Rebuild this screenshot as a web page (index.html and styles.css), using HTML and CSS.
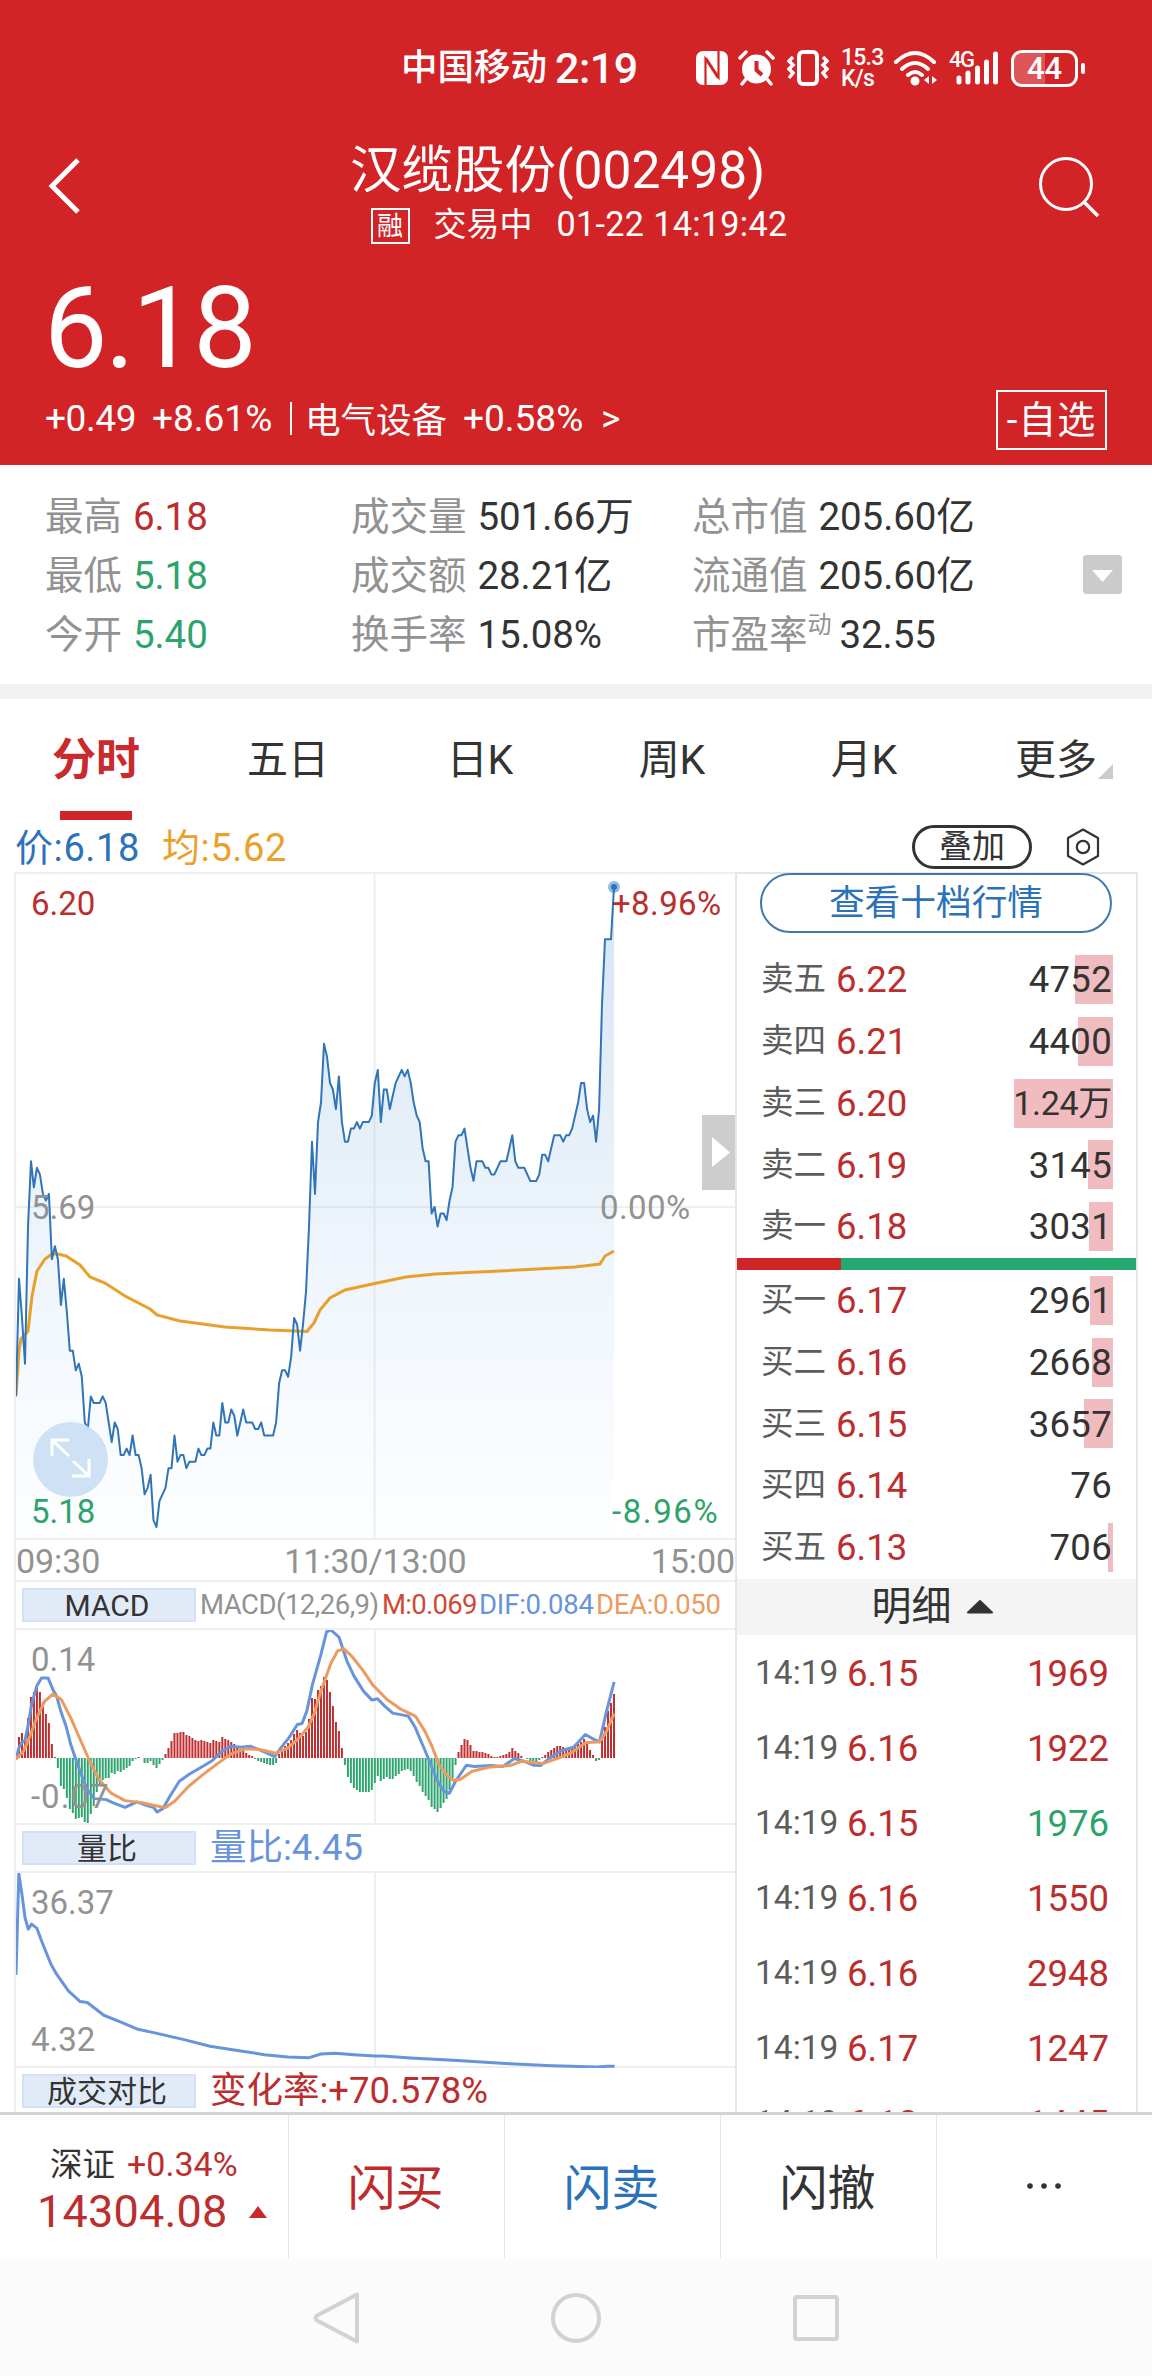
FILE: index.html
```html
<!DOCTYPE html>
<html lang="zh-CN">
<head>
    <meta charset="utf-8">
    <title>汉缆股份(002498)</title>

    <link rel="stylesheet" href="styles.css">
</head>
<body>
    <header class="header">
        <div class="status">
            <span class="carrier">中国移动</span>
            <span class="clock">2:19</span>
            <svg class="nfc" width="32" height="34" viewBox="0 0 32 34">
                <rect width="32" height="34" rx="7" fill="#fff"/>
                <path d="M9.500 34V8L22 27M22.500 0V26L10 7" fill="none" stroke="#d22427" stroke-width="2.200"/>
            </svg>
            <svg class="alarm" width="37" height="36" viewBox="0 0 37 36">
                <circle cx="18.500" cy="19" r="14.500" fill="#fff"/>
                <path d="M2 8L8 2M35 8L29 2M8 29L4 34M29 29L33 34" stroke="#fff" stroke-width="3.500" stroke-linecap="round"/>
                <path d="M18.500 11V20L24 25" stroke="#d22427" stroke-width="4" fill="none"/>
            </svg>
            <svg class="vibrate" width="42" height="36" viewBox="0 0 42 36" fill="none" stroke="#fff">
                <rect x="12" y="2" width="18" height="32" rx="4" stroke-width="4"/>
                <path d="M6 7L2 11L6 15L2 19L6 23L2 28M36 7L40 11L36 15L40 19L36 23L40 28" stroke-width="3.500"/>
            </svg>
            <span class="speed">15.3<br>K/s</span>
            <svg class="wifi" width="46" height="36" viewBox="0 0 46 36" fill="none" stroke="#fff" stroke-width="4" stroke-linecap="round">
                <path d="M3 12Q22 -6 41 12M9 19Q22 7 35 19M15 25Q22 19 29 25"/>
                <circle cx="22" cy="31" r="2.500" fill="#fff"/>
                <path d="M36 26V34L31 30ZM39 26V34L44 30Z" fill="#fff" stroke="none"/>
            </svg>
            <div class="signal">
                <span>4G</span>
                <svg width="46" height="34" viewBox="0 0 46 34" stroke="#fff" stroke-width="5" stroke-linecap="round">
                    <path d="M5 27V31M14 22V31M23.500 17V31M32.500 11V31M41.500 3V31"/>
                </svg>
            </div>
            <div class="battery"><span>44</span></div>
        </div>

        <div class="titlebar">
            <svg class="back" width="34" height="60" viewBox="0 0 34 60" fill="none" stroke="#fff" stroke-width="5">
                <path d="M31 4L5 30L31 56"/>
            </svg>
            <div class="title">
                <h1>汉缆股份(002498)</h1>
                <p><b class="tag">融</b><span>交易中</span><span class="time">01-22 14:19:42</span></p>
            </div>
            <svg class="search" width="64" height="64" viewBox="0 0 64 64" fill="none" stroke="#fff" stroke-width="3">
                <circle cx="29" cy="29" r="25.500"/>
                <path d="M47 47L61 61" stroke-width="3.500"/>
            </svg>
        </div>

        <div class="price">6.18</div>
        <div class="change">
            <span class="up-abs">+0.49</span>
            <span class="up-pct">+8.61%</span>
            <i></i>
            <span class="sector">电气设备</span>
            <span class="sector-pct">+0.58%</span>
            <span class="more">&gt;</span>
            <button class="watch">-自选</button>
        </div>
    </header>

    <section class="stats">
        <dl>
            <div><dt>最高</dt><dd class="red">6.18</dd></div>
            <div><dt>最低</dt><dd class="green">5.18</dd></div>
            <div><dt>今开</dt><dd class="green">5.40</dd></div>
        </dl>
        <dl>
            <div><dt>成交量</dt><dd>501.66万</dd></div>
            <div><dt>成交额</dt><dd>28.21亿</dd></div>
            <div><dt>换手率</dt><dd>15.08%</dd></div>
        </dl>
        <dl>
            <div><dt>总市值</dt><dd>205.60亿</dd></div>
            <div><dt>流通值</dt><dd>205.60亿</dd></div>
            <div><dt>市盈率<small>动</small></dt><dd class="pe">32.55</dd></div>
        </dl>
        <svg class="expand" width="39" height="39" viewBox="0 0 39 39">
            <rect width="39" height="39" rx="3" fill="#cbcbcb"/>
            <path d="M9 15H30L19.500 27Z" fill="#fff"/>
        </svg>
    </section>

    <nav class="tabs">
        <a class="active">分时</a>
        <a>五日</a>
        <a>日K</a>
        <a>周K</a>
        <a>月K</a>
        <a class="dropdown">更多</a>
    </nav>

    <div class="legend">
        <span class="blue">价:6.18</span>
        <span class="orange">均:5.62</span>
        <button class="overlay">叠加</button>
        <svg width="36" height="38" viewBox="0 0 36 38" fill="none" stroke="#333" stroke-width="2.200">
            <path d="M18 1.500L33 10V28L18 36.500L3 28V10Z" stroke-linejoin="round"/>
            <circle cx="18" cy="19" r="6.200"/>
        </svg>
    </div>

    <main class="main">
        <div class="charts">
            <div class="chart minute">
                <svg width="719" height="666" viewBox="0 0 719 666" fill="none">
                    <defs>
                        <linearGradient id="fill" x1="0" y1="0" x2="0" y2="666" gradientUnits="userSpaceOnUse">
                            <stop offset="0" stop-color="#2a75bd" stop-opacity=".2"/>
                            <stop offset="1" stop-color="#5aa5ed" stop-opacity=".01"/>
                        </linearGradient>
                    </defs>
                    <path d="M0 333H719M358.500 0V666" stroke="#efefef" stroke-width="2"/>
                    <polygon id="priceArea" fill="url(#fill)"/>
                    <polyline stroke="#e9a02b" stroke-width="3" points="0,521 3,477 5,465 12,457 16,422 21,397 29,385 36,380 42,380 50,382 64,391 74,403 89,409 109,422 134,435 141,441 164,447 209,453 254,456 291,457.500 298,449 304,436 314,424 329,416 361,409 390,403 419,400 484,397 559,393 584,390 589,382 598,377"/>
                    <polyline id="priceLine" stroke="#2f75b8" stroke-width="2" stroke-linejoin="round"/>
                    <circle cx="598" cy="13" r="6" fill="#2a75bd" fill-opacity=".5"/>
                    <circle cx="598" cy="13" r="3" fill="#2a75bd"/>
                </svg>
                <span class="lab top red">6.20</span>
                <span class="lab mid">5.69</span>
                <span class="lab low green">5.18</span>
                <span class="lab rtop red">+8.96%</span>
                <span class="lab rmid">0.00%</span>
                <span class="lab rlow green">-8.96%</span>
                <svg class="zoom" width="75" height="75" viewBox="0 0 75 75" fill="none" stroke="#fff" stroke-width="3">
                    <circle cx="37.500" cy="37.500" r="37.500" fill="#cbdff4" fill-opacity=".92" stroke="none"/>
                    <path d="M19 34V18H36M19 18L36 34M56 37V54H39M56 54L40 39"/>
                </svg>
                <svg class="fold" width="33" height="75" viewBox="0 0 33 75">
                    <rect width="33" height="75" fill="#cdcdcd"/>
                    <path d="M10 22L28 37.500L10 52Z" fill="#fff"/>
                </svg>
            </div>

            <div class="axis"><span>09:30</span><span>11:30/13:00</span><span>15:00</span></div>

            <div class="indicator macd">
                <b>MACD</b>
                <span class="gray">MACD(12,26,9)</span>
                <span class="m">M:0.069</span>
                <span class="dif">DIF:0.084</span>
                <span class="dea">DEA:0.050</span>
            </div>
            <div class="chart sub">
                <svg width="719" height="195" viewBox="0 0 719 195">
                    <path d="M359 0V195" stroke="#efefef" stroke-width="2"/>
                    <g id="macdBars"></g>
                    <svg width="719" height="195" viewBox="34 297 1523 584" preserveAspectRatio="none" fill="none" stroke-linejoin="round">
                        <polyline class="line dif-line" points="34,684 40,650 46,635 53,628 60,580 67,520 78,465 88,441 102,441 112,475 120,495 130,545 140,585 150,640 162,690 175,740 185,775 200,802 225,805 240,815 265,828 290,812 310,822 325,828 333,842 345,832 360,795 380,750 400,730 430,705 450,688 470,660 490,645 510,648 530,645 560,662 582,676 595,650 612,620 630,580 640,577 650,540 662,460 680,370 692,302 702,298 718,318 735,390 750,435 770,480 788,507 800,503 815,525 832,546 865,555 880,590 895,640 910,690 925,745 940,780 952,786 965,750 988,702 1005,706 1040,703 1065,706 1090,682 1110,690 1130,702 1145,703 1165,680 1190,658 1215,648 1240,610 1255,622 1270,632 1285,540 1301,452"/>
                        <polyline class="line dea-line" points="34,684 50,660 62,620 78,560 95,510 112,489 130,505 150,560 170,625 190,690 210,745 235,785 265,808 300,814 325,822 350,829 370,810 400,765 430,730 460,698 490,668 520,653 550,655 585,666 610,650 630,625 652,590 665,550 680,480 700,400 715,360 728,353 745,375 770,420 790,462 820,505 850,535 880,555 900,600 915,645 930,700 945,730 960,747 975,745 1000,720 1040,707 1080,703 1105,690 1150,697 1180,682 1210,665 1240,635 1270,632 1285,600 1301,547"/>
                    </svg>
                </svg>
                <span class="lab top">0.14</span>
                <span class="lab low minus">-0.07</span>
            </div>

            <div class="indicator">
                <b>量比</b>
                <span class="dif">量比:4.45</span>
            </div>
            <div class="chart sub">
                <svg width="719" height="195" viewBox="0 0 719 195">
                    <path d="M359 0V195" stroke="#efefef" stroke-width="2"/>
                    <svg width="719" height="195" viewBox="34 157 1523 584" preserveAspectRatio="none" fill="none" stroke-linejoin="round">
                        <polyline class="line dif-line" points="34,462 40,160 47,225 53,290 60,325 67,310 78,322 88,360 98,395 108,430 120,460 145,510 170,542 185,545 220,583 255,603 290,624 335,638 390,656 445,676 510,690 560,701 610,708 655,710 680,699 710,697 750,701 795,705 810,705 870,711 960,718 1080,728 1170,734 1265,738 1285,736 1302,736"/>
                    </svg>
                </svg>
                <span class="lab top">36.37</span>
                <span class="lab low">4.32</span>
            </div>

            <div class="indicator">
                <b>成交对比</b>
                <span class="red">变化率:+70.578%</span>
            </div>
        </div>

        <aside class="book">
            <button class="depth">查看十档行情</button>
            <ul class="orders asks">
                <li><i>卖五</i><em>6.22</em><span>4752</span><u style="width: 38px"></u></li>
                <li><i>卖四</i><em>6.21</em><span>4400</span><u style="width: 35px"></u></li>
                <li><i>卖三</i><em>6.20</em><span class="wan">1.24万</span><u style="width: 99px"></u></li>
                <li><i>卖二</i><em>6.19</em><span>3145</span><u style="width: 25px"></u></li>
                <li><i>卖一</i><em>6.18</em><span>3031</span><u style="width: 24px"></u></li>
            </ul>
            <div class="ratio"><i style="width: 26%"></i></div>
            <ul class="orders bids">
                <li><i>买一</i><em>6.17</em><span>2961</span><u style="width: 23px"></u></li>
                <li><i>买二</i><em>6.16</em><span>2668</span><u style="width: 21px"></u></li>
                <li><i>买三</i><em>6.15</em><span>3657</span><u style="width: 29px"></u></li>
                <li><i>买四</i><em>6.14</em><span>76</span><u style="width: 0"></u></li>
                <li><i>买五</i><em>6.13</em><span>706</span><u style="width: 5px"></u></li>
            </ul>
            <div class="detail-head">明细
                <svg width="28" height="16" viewBox="0 0 28 16"><path d="M14 2L26 13.500H2Z" fill="#333" stroke="#333" stroke-width="2" stroke-linejoin="round"/></svg>
            </div>
            <ul class="ticks">
                <li><i>14:19</i><em>6.15</em><span>1969</span></li>
                <li><i>14:19</i><em>6.16</em><span>1922</span></li>
                <li><i>14:19</i><em>6.15</em><span class="green">1976</span></li>
                <li><i>14:19</i><em>6.16</em><span>1550</span></li>
                <li><i>14:19</i><em>6.16</em><span>2948</span></li>
                <li><i>14:19</i><em>6.17</em><span>1247</span></li>
                <li><i>14:19</i><em>6.18</em><span>1445</span></li>
            </ul>
        </aside>
    </main>

    <footer class="actions">
        <div class="index">
            <p><span>深证</span> <em>+0.34%</em></p>
            <p class="points">14304.08 <svg width="18" height="12" viewBox="0 0 18 12"><path d="M9 0L18 12H0Z" fill="#c9282b"/></svg></p>
        </div>
        <button class="buy">闪买</button>
        <button class="sell">闪卖</button>
        <button>闪撤</button>
        <button class="dots">
            <svg width="36" height="8" viewBox="0 0 36 8" fill="#333"><circle cx="4" cy="4" r="2.800"/><circle cx="18" cy="4" r="2.800"/><circle cx="32" cy="4" r="2.800"/></svg>
        </button>
    </footer>

    <div class="sysnav">
        <svg width="52" height="52" viewBox="0 0 52 52"><path d="M47 2.500V49.500L7 28.500Q4 26 7 23.500Z"/></svg>
        <svg width="52" height="52" viewBox="0 0 52 52"><circle cx="26" cy="26" r="23"/></svg>
        <svg width="52" height="52" viewBox="0 0 52 52"><rect x="5" y="5" width="42" height="42" rx="2"/></svg>
    </div>

    <script src="script.js"></script>
</body>
</html>
```

FILE: styles.css
```css
* {
    box-sizing: border-box;
    margin: 0;
    padding: 0;
}
body {
    width: 1152px;
    height: 2376px;
    overflow: hidden;
    background: #fff;
    color: #333;
    font-family: Roboto, "Noto Sans CJK SC", sans-serif;
    font-size: 37px;
}
i, em {
    font-style: normal;
}
ul {
    list-style: none;
}
button {
    font: inherit;
    background: none;
    border: none;
}
svg {
    display: block;
}
.red { color: #bc2d2e; }
.green { color: #2da36c; }
.blue { color: #2c72b8; }
.orange { color: #eba02c; }

/* header */
.header {
    height: 465px;
    background: #d22427;
    color: #fff;
}
.status {
    display: flex;
    align-items: center;
    height: 136px;
    padding-left: 401px;
}
.carrier {
    width: 154px;
    font-size: 36.500px;
    font-weight: 500;
    line-height: 44px;
    white-space: nowrap;
}
.clock {
    width: 141px;
    font-size: 43px;
    font-weight: 500;
    letter-spacing: -.5px;
}
.nfc { margin-right: 10px; }
.alarm { margin-right: 12px; }
.vibrate { margin-right: 12px; }
.speed {
    width: 52px;
    font-size: 23px;
    font-weight: 500;
    line-height: 21px;
    letter-spacing: -.8px;
}
.wifi { margin-right: 10px; }
/* network label sits above the short bars */
.signal {
    display: grid;
    width: 62px;
}
.signal span, .signal svg { grid-area: 1 / 1; }
.signal svg { margin-left: 5px; }
.signal span {
    font-size: 22px;
    font-weight: 500;
    line-height: 18px;
    letter-spacing: -1.500px;
}
.battery {
    position: relative;
    width: 67px;
    height: 37px;
    border: 3px solid #fff;
    border-radius: 11px;
    background: linear-gradient(90deg, #dd5558 50%, transparent 50%);
    font-size: 31px;
    font-weight: 500;
    line-height: 31px;
    text-align: center;
}
.battery::after {
    content: "";
    position: absolute;
    right: -10px;
    top: 10px;
    width: 4px;
    height: 11px;
    border-radius: 2px;
    background: #fff;
}
.titlebar {
    display: flex;
    align-items: flex-start;
    height: 134px;
}
.back { margin: 20px 0 0 47px; }
.title {
    width: 815px;
    margin-left: 69px;
    text-align: center;
}
.title h1 {
    font-size: 51.500px;
    font-weight: 400;
    line-height: 70px;
    height: 68px;
}
.title p {
    display: flex;
    justify-content: center;
    height: 42px;
    font-size: 33px;
    line-height: 41px;
    padding-left: 43px;
}
.title p span { margin-left: 24px; }
.title .time {
    font-size: 34.200px;
    letter-spacing: .3px;
}
.title .tag {
    width: 39px;
    height: 36px;
    margin-top: 4px;
    border: 2px solid #fff;
    font-size: 26px;
    font-weight: 400;
    line-height: 32px;
}
.search {
    margin: 19px 0 0 72px;
}
.price {
    height: 112px;
    padding-left: 44px;
    font-size: 113px;
    line-height: 117px;
    letter-spacing: -2.500px;
}
.change {
    display: flex;
    align-items: center;
    height: 73px;
    padding-left: 45px;
    font-size: 37px;
    white-space: nowrap;
}
.up-abs { width: 107px; letter-spacing: -.4px; }
.up-pct { width: 138px; }
.change i {
    width: 2px;
    height: 33px;
    margin-right: 13px;
    background: #fff;
}
.sector {
    width: 158px;
    margin-top: -2px;
    font-size: 35.500px;
}
.sector-pct { width: 138px; }
.more { width: 395px; }
.watch {
    height: 60px;
    width: 111px;
    margin-top: 3px;
    border: 2px solid #fff;
    color: #fff;
    font-size: 38px;
    line-height: 54px;
    letter-spacing: 1px;
}

/* key figures */
.stats {
    display: flex;
    height: 219px;
    padding: 22px 30px 0 45px;
    font-size: 38.500px;
}
.stats dl { width: 306px; }
.stats dl:nth-of-type(2) { width: 341px; }
.stats dl:nth-of-type(3) { width: 391px; }
.stats dl div {
    display: flex;
    height: 59px;
    line-height: 60px;
    white-space: nowrap;
}
.stats dt { color: #929292; }
.stats dd {
    margin-left: 11px;
    letter-spacing: -.1px;
}
.stats small {
    font-size: 24px;
    vertical-align: 15px;
    line-height: 1;
}
.stats .pe { margin-left: 8px; }
.expand { margin-top: 68px; }

/* period tabs */
.tabs {
    display: grid;
    grid-template-columns: repeat(6, 1fr);
    height: 136px;
    border-top: 15px solid #f1f1f1;
    font-size: 41px;
    line-height: 122px;
    text-align: center;
}
.tabs a { position: relative; }
.tabs .active {
    color: #c92a2b;
    font-size: 44px;
    font-weight: 700;
}
.tabs .active::after {
    content: "";
    position: absolute;
    left: 60px;
    bottom: 1px;
    width: 72px;
    height: 9px;
    background: #d12427;
}
.tabs .dropdown::after {
    content: "";
    position: absolute;
    right: 39px;
    bottom: 42px;
    border-left: 15px solid transparent;
    border-bottom: 15px solid #cbcbcb;
}
.legend {
    display: flex;
    align-items: center;
    height: 52px;
    padding: 2px 51px 0 15px;
}
.legend span { margin-top: -6px; font-size: 38px; letter-spacing: .6px; }
.legend .blue { width: 147px; }
.legend .orange { width: 750px; }
.overlay {
    width: 120px;
    height: 44px;
    margin-right: 33px;
    border: 3px solid #333;
    border-radius: 22px;
    color: #333;
    font-size: 33px;
    line-height: 38px;
}

/* charts and order book */
.main {
    display: flex;
    height: 1240px;
    margin: 0 14px;
    overflow: hidden;
}
.charts {
    width: 721px;
    border-left: 2px solid #efefef;
}
.chart {
    position: relative;
    border-top: 2px solid #efefef;
}
.minute { height: 666px; }
.sub { height: 195px; }
.lab {
    position: absolute;
    left: 15px;
    color: #929292;
    font-size: 33px;
    line-height: 36px;
}
.lab.red { color: #bc2d2e; }
.lab.green { color: #2da36c; }
.minute .top { top: 12px; }
.minute .mid { top: 316px; }
.minute .low { top: 620px; }
.minute .rtop { left: 596px; top: 12px; letter-spacing: .4px; }
.minute .rmid { left: 584px; top: 316px; letter-spacing: .4px; }
.minute .rlow { left: 596px; top: 620px; letter-spacing: 1.600px; }
.sub .top { top: 12px; }
.sub .low { top: 149px; }
.sub .minus { letter-spacing: 1px; }
.zoom {
    position: absolute;
    left: 17px;
    top: 548px;
}
.fold {
    position: absolute;
    right: 0;
    top: 241px;
}
.axis {
    display: flex;
    justify-content: space-between;
    height: 42px;
    border-top: 2px solid #efefef;
    color: #929292;
    font-size: 34px;
    line-height: 42px;
    letter-spacing: -.1px;
}
.indicator {
    display: flex;
    align-items: center;
    height: 48px;
    border-top: 2px solid #efefef;
    font-size: 36.500px;
    line-height: 44px;
    white-space: nowrap;
}
.indicator b {
    width: 174px;
    height: 34px;
    margin: 0 14px 0 6px;
    border: 2px solid #d3e0f5;
    background: #e1ebf8;
    font-size: 30px;
    font-weight: 400;
    line-height: 31px;
    text-align: center;
    text-indent: -4px;
}
.macd { font-size: 27.500px; letter-spacing: -.5px; }
.macd b { margin-right: 4px; letter-spacing: 0; }
.macd .gray { width: 182px; color: #929292; }
.macd .m { width: 97px; color: #cf4a35; letter-spacing: -.7px; }
.macd .dif { width: 117px; letter-spacing: -.2px; }
.dif { color: #6794da; }
.dea { color: #eb9b61; letter-spacing: -.3px; }
.line {
    stroke-width: 3px;
    vector-effect: non-scaling-stroke;
}
.dif-line { stroke: #6794da; }
.dea-line { stroke: #eb9b61; }

.book {
    width: 403px;
    border: 2px solid #e6e6e6;
    border-bottom: none;
}
.depth {
    display: block;
    width: 352px;
    height: 60px;
    margin: -1px 0 0 23px;
    border: 2px solid #3f79ad;
    border-radius: 30px;
    color: #2c72b8;
    font-size: 35.700px;
    line-height: 57px;
}
.orders li {
    display: grid;
    grid-template-columns: 75px 120px 1fr;
    align-items: center;
    height: 61.750px;
    padding: 0 24px;
    font-size: 36.500px;
    line-height: 49px;
    position: relative;
}
.orders i {
    color: #5c5c5c;
    font-size: 32.500px;
}
.orders em { color: #bc2d2e; }
.orders span { text-align: right; letter-spacing: .3px; }
.orders .wan { font-size: 34px; letter-spacing: -.3px; }
/* volume share drawn behind the number */
.orders u {
    position: absolute;
    right: 23px;
    top: 6px;
    height: 49px;
    background: #f0bcbf;
    z-index: -1;
}
.asks { padding-top: 16px; }
.ratio {
    height: 12px;
    background: #24a96e;
}
.ratio i {
    display: block;
    height: 12px;
    background: #d12427;
}
.detail-head {
    display: flex;
    align-items: center;
    justify-content: center;
    gap: 14px;
    height: 56px;
    padding-right: 8px;
    background: #f4f4f4;
    font-size: 40px;
    line-height: 57px;
}
.ticks li {
    display: grid;
    grid-template-columns: 92px 120px 1fr;
    height: 75px;
    padding: 0 27px 0 18px;
    color: #bc2d2e;
    font-size: 36.500px;
    line-height: 77px;
}
.ticks i {
    color: #5c5c5c;
    font-size: 33.500px;
    line-height: 75px;
}
.ticks span { text-align: right; }

/* bottom bar */
.actions {
    display: grid;
    grid-template-columns: 289px 216px 216px 216px 215px;
    height: 147px;
    border-top: 3px solid #d4d4d4;
}
.actions > * { border-right: 1px solid #e4e4e4; }
.actions > :last-child { border-right: none; }
.actions button {
    padding: 0 2px 6px 0;
    color: #333;
    font-size: 48px;
}
.actions .buy { color: #bf2b2d; }
.actions .sell { color: #2c72b8; }
.actions .dots { padding-bottom: 3px; }
.index {
    padding: 27px 0 0 50px;
    line-height: 44px;
    white-space: nowrap;
}
.index p { font-size: 32.500px; }
.index em {
    margin-left: 4px;
    color: #bc2d2e;
    font-size: 34px;
}
.index .points {
    display: flex;
    align-items: center;
    gap: 21px;
    margin-left: -13px;
    color: #bc2d2e;
    font-size: 45px;
    line-height: 50px;
    letter-spacing: .2px;
}
.dots svg { margin: 0 auto; }
.sysnav {
    display: flex;
    justify-content: center;
    gap: 188px;
    height: 117px;
    padding-top: 33px;
    background: #fbfbfb;
}
.sysnav svg {
    fill: none;
    stroke: #d2d2d2;
    stroke-width: 4px;
    stroke-linejoin: round;
}
```

FILE: script.js
```javascript
// minute prices, in cents above or below the previous close (5.69)
const prices = [
    -29, -11, -17, -24, -3, 7, 3, 6, 5, 2, 1, 2, -8, -6, -8, -15, -11, -16, -22, -22,
    -25, -24, -26, -33, -34, -29, -30, -30, -30, -29, -30, -33, -36, -33, -34, -38, -38, -37, -38, -35,
    -38, -38, -40, -44, -43, -41, -48, -49, -45, -44, -43, -40, -40, -35, -39, -38, -38, -40, -39, -39,
    -39, -37, -38, -38, -37, -37, -33, -35, -35, -30, -33, -33, -31, -32, -35, -33, -31, -33, -33, -33,
    -34, -34, -33, -35, -35, -35, -35, -33, -27, -25, -25, -26, -23, -17, -18, -22, -18, -13, -3, 10,
    2, 13, 16, 25, 23, 19, 18, 15, 20, 13, 10, 10, 12, 12, 13, 12, 13, 13, 13, 14,
    19, 21, 13, 18, 18, 15, 17, 19, 20, 21, 20, 21, 19, 16, 14, 13, 9, 7, 7, -1,
    0, -3, -1, -1, -2, 1, 3, 10, 11, 11, 12, 9, 6, 4, 7, 7, 7, 6, 6, 5,
    5, 6, 7, 7, 7, 9, 11, 7, 6, 6, 6, 5, 4, 4, 4, 5, 8, 8, 7, 9,
    11, 11, 11, 10, 11, 11, 12, 14, 16, 19, 19, 15, 13, 14, 10, 15, 31, 41, 41, 41,
    49
];

const macd = [
    0, 21, 25, 18, 40, 61, 66, 70, 66, 56, 44, 35, 14, 1, -10, -28, -31, -40, -51, -55,
    -61, -60, -59, -64, -65, -56, -48, -34, -26, -22, -20, -20, -15, -16, -13, -14, -12, -10, -8, -3,
    -1, 1, 0, -5, -5, -3, -7, -10, -6, -2, 4, 10, 17, 25, 25, 26, 26, 23, 22, 20,
    18, 17, 18, 17, 16, 15, 18, 17, 16, 21, 19, 18, 16, 14, 12, 9, 7, 5, 3, 2,
    -1, -3, -4, -5, -6, -7, -7, -5, 4, 9, 12, 15, 18, 24, 28, 25, 22, 26, 39, 60,
    59, 68, 72, 81, 78, 66, 52, 36, 27, 10, -7, -19, -25, -30, -32, -34, -34, -34, -34, -32,
    -25, -18, -23, -21, -19, -21, -21, -18, -16, -13, -12, -11, -13, -18, -24, -28, -34, -38, -42, -49,
    -51, -54, -50, -45, -41, -32, -20, -7, 6, 13, 19, 18, 13, 7, 7, 6, 6, 5, 4, 2,
    1, 1, 2, 3, 4, 6, 10, 7, 5, 2, 0, -1, -3, -4, -4, -2, 1, 3, 6, 8,
    10, 12, 12, 11, 10, 11, 10, 12, 14, 16, 19, 15, 8, 3, -3, -2, 18, 31, 47, 55,
    64
];

const step = 2.99;

const points = prices.map((p, i) => (i * step).toFixed(1) + ',' + (333 - p * 6.53).toFixed(1)).join(' ');
document.getElementById('priceLine').setAttribute('points', points);
document.getElementById('priceArea').setAttribute('points', '0,666 ' + points + ' 598,666');

const bars = document.getElementById('macdBars');
macd.forEach((v, i) => {
    const bar = document.createElementNS('http://www.w3.org/2000/svg', 'rect');
    bar.setAttribute('x', i * step - 1);
    bar.setAttribute('y', v > 0 ? 128 - v : 128);
    bar.setAttribute('width', 2);
    bar.setAttribute('height', Math.abs(v));
    bar.setAttribute('fill', v > 0 ? '#c02e30' : '#2ea56f');
    bars.appendChild(bar);
});
```
